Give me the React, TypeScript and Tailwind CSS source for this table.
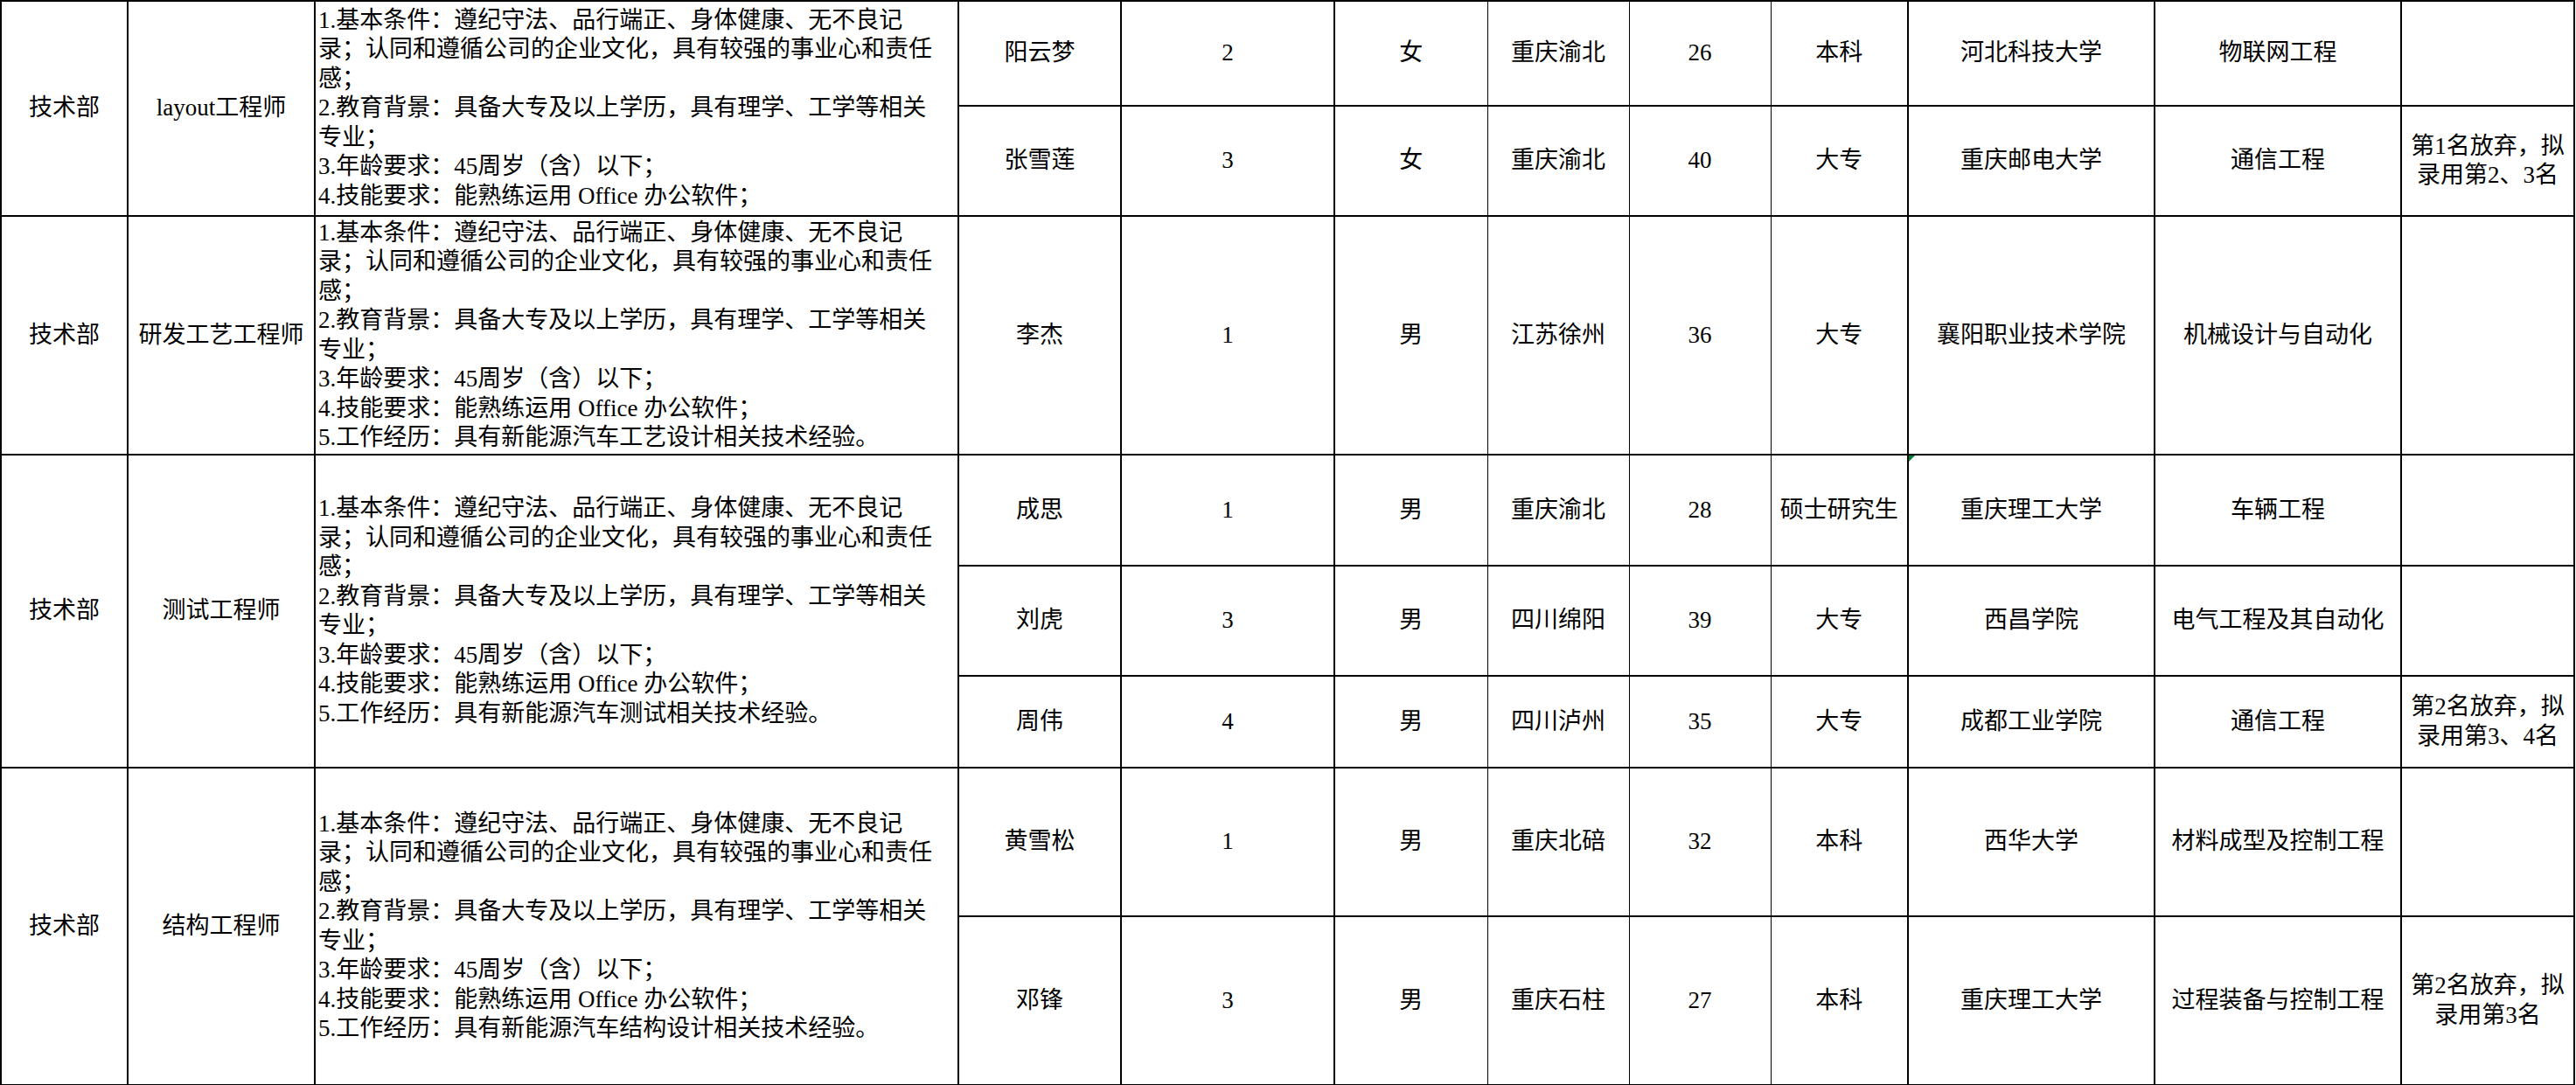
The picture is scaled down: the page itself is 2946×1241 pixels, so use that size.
import React from 'react';

type Person = {
  name: string;
  rank: string;
  sex: string;
  place: string;
  age: string;
  edu: string;
  school: string;
  major: string;
  note?: string;
  h: string;
  flag?: boolean;
};

type Group = {
  dept: string;
  title: string;
  exp?: string;
  people: Person[];
};

const groups: Group[] = [
  {
    dept: '技术部',
    title: 'layout工程师',
    people: [
      { name: '阳云梦', rank: '2', sex: '女', place: '重庆渝北', age: '26', edu: '本科', school: '河北科技大学', major: '物联网工程', h: 'h-[120px]' },
      { name: '张雪莲', rank: '3', sex: '女', place: '重庆渝北', age: '40', edu: '大专', school: '重庆邮电大学', major: '通信工程', note: '第1名放弃，拟录用第2、3名', h: 'h-[126px]' },
    ],
  },
  {
    dept: '技术部',
    title: '研发工艺工程师',
    exp: '5.工作经历：具有新能源汽车工艺设计相关技术经验。',
    people: [
      { name: '李杰', rank: '1', sex: '男', place: '江苏徐州', age: '36', edu: '大专', school: '襄阳职业技术学院', major: '机械设计与自动化', h: 'h-[273px]' },
    ],
  },
  {
    dept: '技术部',
    title: '测试工程师',
    exp: '5.工作经历：具有新能源汽车测试相关技术经验。',
    people: [
      { name: '成思', rank: '1', sex: '男', place: '重庆渝北', age: '28', edu: '硕士研究生', school: '重庆理工大学', major: '车辆工程', h: 'h-[127px]', flag: true },
      { name: '刘虎', rank: '3', sex: '男', place: '四川绵阳', age: '39', edu: '大专', school: '西昌学院', major: '电气工程及其自动化', h: 'h-[126px]' },
      { name: '周伟', rank: '4', sex: '男', place: '四川泸州', age: '35', edu: '大专', school: '成都工业学院', major: '通信工程', note: '第2名放弃，拟录用第3、4名', h: 'h-[105px]' },
    ],
  },
  {
    dept: '技术部',
    title: '结构工程师',
    exp: '5.工作经历：具有新能源汽车结构设计相关技术经验。',
    people: [
      { name: '黄雪松', rank: '1', sex: '男', place: '重庆北碚', age: '32', edu: '本科', school: '西华大学', major: '材料成型及控制工程', h: 'h-[170px]' },
      { name: '邓锋', rank: '3', sex: '男', place: '重庆石柱', age: '27', edu: '本科', school: '重庆理工大学', major: '过程装备与控制工程', note: '第2名放弃，拟录用第3名', h: 'h-[193px]' },
    ],
  },
];

const baseLines = [
  '1.基本条件：遵纪守法、品行端正、身体健康、无不良记录；认同和遵循公司的企业文化，具有较强的事业心和责任感；',
  '2.教育背景：具备大专及以上学历，具有理学、工学等相关专业；',
  '3.年龄要求：45周岁（含）以下；',
  '4.技能要求：能熟练运用 Office 办公软件；',
];

const cell = 'border-2 border-black text-center align-middle p-0';

export default function App() {
  return (
    <div className="w-[2946px] h-[1241px] bg-white overflow-hidden text-black font-['Liberation_Serif','Noto_Sans_CJK_SC',serif] text-[27px] leading-[33.5px]">
      <table className="table-fixed border-collapse w-[2944px]">
        <colgroup>
          <col className="w-[145px]" />
          <col className="w-[214px]" />
          <col className="w-[736px]" />
          <col className="w-[186px]" />
          <col className="w-[244px]" />
          <col className="w-[175px]" />
          <col className="w-[162px]" />
          <col className="w-[162px]" />
          <col className="w-[157px]" />
          <col className="w-[282px]" />
          <col className="w-[282px]" />
          <col className="w-[198px]" />
        </colgroup>
        <tbody>
          {groups.map((g, gi) =>
            g.people.map((p, pi) => (
              <tr key={`${gi}-${pi}`} className={p.h}>
                {pi === 0 && (
                  <>
                    <td rowSpan={g.people.length} className={cell}>{g.dept}</td>
                    <td rowSpan={g.people.length} className={cell}>{g.title}</td>
                    <td rowSpan={g.people.length} className="border-2 border-black text-left align-middle pl-[3px] pr-[18px] py-0">
                      {baseLines.map(l => <div key={l}>{l}</div>)}
                      {g.exp && <div>{g.exp}</div>}
                    </td>
                  </>
                )}
                <td className={cell}>{p.name}</td>
                <td className={cell}>{p.rank}</td>
                <td className="border-y-2 border-l-2 border-r border-black text-center align-middle p-0">{p.sex}</td>
                <td className="border-y-2 border-x border-black text-center align-middle p-0">{p.place}</td>
                <td className="border-y-2 border-x border-black text-center align-middle p-0">{p.age}</td>
                <td className="border-y-2 border-l border-r-2 border-black text-center align-middle p-0">{p.edu}</td>
                <td className={`${cell} relative`}>
                  {p.flag && (
                    <span className="absolute left-0 top-0 w-0 h-0 border-t-[7px] border-r-[7px] border-t-green-700 border-r-transparent" />
                  )}
                  {p.school}
                </td>
                <td className={cell}>{p.major}</td>
                <td className="border-2 border-black text-center align-middle px-1 py-0">{p.note ?? ''}</td>
              </tr>
            ))
          )}
        </tbody>
      </table>
    </div>
  );
}
